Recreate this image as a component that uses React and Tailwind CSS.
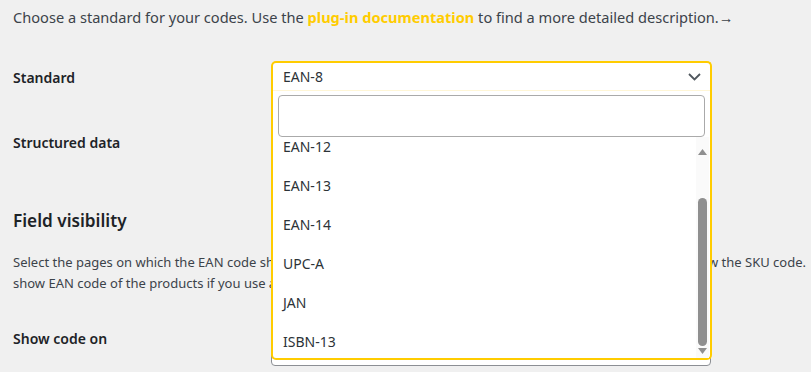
import React from "react";

const items = ["EAN-8", "EAN-12", "EAN-13", "EAN-14", "UPC-A", "JAN", "ISBN-13"];

function Triangle({ up }) {
  return (
    <svg width="9" height="6" viewBox="0 0 9 6" className="block">
      {up ? <path d="M0 6 L4.5 0 L9 6 Z" fill="#8f8f8f" /> : <path d="M0 0 L4.5 6 L9 0 Z" fill="#8f8f8f" />}
    </svg>
  );
}

export default function App() {
  return (
    <div className="w-[811px] h-[372px] overflow-hidden bg-[#f0f0f0] text-[#3c434a] text-[14px] leading-[20px] font-['Noto_Sans',sans-serif] pl-[13px]">
      <p className="pt-[7px] text-[14.6px]">
        Choose a standard for your codes. Use the{" "}
        <a className="font-bold text-[#ffcc00]">plug-in documentation</a> to find a more detailed description.→
      </p>

      <div className="mt-[34px] flex">
        <div className="w-[258px] pt-[7px] font-semibold text-[#1d2327]">Standard</div>
        <div className="relative w-[441px]">
          <div className="h-[29px] flex items-center justify-between pl-[10px] pr-[9px] bg-white border-2 border-b-0 border-[#ffcc00] rounded-t-[5px]">
            <span className="text-[#2c3338]">EAN-8</span>
            <svg width="13" height="8" viewBox="0 0 13 8" fill="none">
              <path d="M1 1 L6.5 6.5 L12 1" stroke="#50575e" strokeWidth="1.8" />
            </svg>
          </div>
          <div className="absolute left-0 top-[29px] w-[441px] h-[270px] z-10 bg-white border-2 border-t-0 border-[#ffcc00] rounded-b-[5px] flex flex-col">
            <div className="h-px bg-[#fff6d6]" />
            <div className="px-[5px] pt-[4px]">
              <div className="h-[42px] border border-[#aaaaaa] rounded-[4px] bg-white" />
            </div>
            <div className="relative flex-1 overflow-hidden">
              <div className="-mt-[49px]">
                {items.map((it) => (
                  <div key={it} className="h-[39px] flex items-center pl-[10px] text-[#2c3338]">
                    {it}
                  </div>
                ))}
              </div>
              <div className="absolute right-[1px] top-0 bottom-0 w-[13px] bg-[#fafafa] flex flex-col items-center">
                <div className="pt-[12px]"><Triangle up /></div>
                <div className="mt-[43px] w-[9px] h-[148px] rounded-full bg-[#8f8f8f]" />
                <div className="mt-[2px]"><Triangle /></div>
              </div>
            </div>
          </div>
        </div>
      </div>

      <div className="mt-[43px] flex">
        <div className="w-[258px] font-semibold text-[#1d2327]">Structured data</div>
      </div>

      <h2 className="mt-[56px] text-[17.2px] leading-[24px] font-semibold text-[#1d2327]">Field visibility</h2>

      <div className="mt-[19px] text-[13px] leading-[21px] whitespace-nowrap">
        <div className="w-[793px] flex justify-between">
          <span>Select the pages on which the EAN code should be displayed. By default, the code will appear</span>
          <span>below the SKU code.</span>
        </div>
        <div>show EAN code of the products if you use a custom product template.</div>
      </div>

      <div className="mt-[35px] flex">
        <div className="w-[258px] font-semibold text-[#1d2327]">Show code on</div>
        <div className="w-[440px] h-[37px] bg-white border border-[#8c8f94] rounded-[4px]" />
      </div>
    </div>
  );
}
